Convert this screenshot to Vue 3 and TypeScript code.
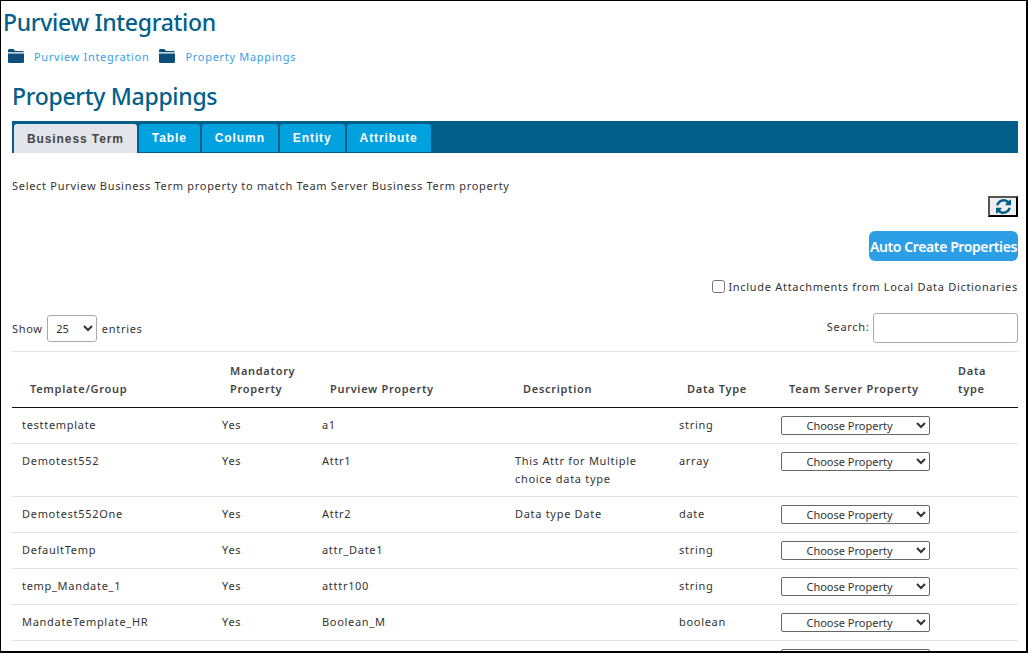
<script setup lang="ts">
const tabs = ['Business Term', 'Table', 'Column', 'Entity', 'Attribute']

const rows = [
  { group: 'testtemplate', mandatory: 'Yes', property: 'a1', description: '', type: 'string' },
  { group: 'Demotest552', mandatory: 'Yes', property: 'Attr1', description: 'This Attr for Multiple choice data type', type: 'array' },
  { group: 'Demotest552One', mandatory: 'Yes', property: 'Attr2', description: 'Data type Date', type: 'date' },
  { group: 'DefaultTemp', mandatory: 'Yes', property: 'attr_Date1', description: '', type: 'string' },
  { group: 'temp_Mandate_1', mandatory: 'Yes', property: 'atttr100', description: '', type: 'string' },
  { group: 'MandateTemplate_HR', mandatory: 'Yes', property: 'Boolean_M', description: '', type: 'boolean' },
  { group: '', mandatory: '', property: '', description: '', type: '' }
]
</script>

<template>
  <div class="page">
    <h1 class="title">Purview Integration</h1>
    <nav class="crumbs">
      <template v-for="c in ['Purview Integration', 'Property Mappings']" :key="c">
        <svg class="folder" viewBox="0 0 16 14"><path d="M0 1.6C0 .7.7 0 1.6 0h3.8l1.7 1.9h7.3c.9 0 1.6.6 1.6 1.4H0z" /><path d="M0 4.4h16v8c0 .9-.7 1.6-1.6 1.6H1.6C.7 14 0 13.300 0 12.400z" /></svg>
        <a class="crumb">{{ c }}</a>
      </template>
    </nav>
    <div class="content">
      <h2 class="subtitle">Property Mappings</h2>
      <div class="tabs">
        <button v-for="(t, i) in tabs" :key="t" class="tab" :class="{ active: i === 0 }">{{ t }}</button>
      </div>
      <p class="hint">Select Purview Business Term property to match Team Server Business Term property</p>
      <div class="actions">
        <button class="refresh" aria-label="Refresh">
          <svg viewBox="0 0 1536 1536" width="15" height="15"><path fill="#035f8a" d="M1511 928q0 5-1 7-64 268-268 434.500T764 1536q-146 0-282.500-55T238 1324l-129 129q-19 19-45 19t-45-19-19-45V960q0-26 19-45t45-19h448q26 0 45 19t19 45-19 45l-137 137q71 66 161 102t187 36q134 0 250-65t186-179q11-17 53-117 8-23 30-23h192q13 0 22.500 9.500t9.500 22.500zm25-800v448q0 26-19 45t-45 19h-448q-26 0-45-19t-19-45 19-45l138-138q-148-137-349-137-134 0-250 65T332 500q-11 17-53 117-8 23-30 23H50q-13 0-22.500-9.500T18 608v-7q65-268 270-434.500T768 0q146 0 284 55.500T1297 212l130-129q19-19 45-19t45 19 19 45z" /></svg>
        </button>
        <button class="auto">Auto Create Properties</button>
        <label class="attach"><input type="checkbox" /><span>Include Attachments from Local Data Dictionaries</span></label>
      </div>
      <div class="controls">
        <label class="length">Show
          <select class="length-select"><option>25</option></select>
          entries</label>
        <label class="search">Search: <input type="text" /></label>
      </div>
      <table class="grid">
        <colgroup>
          <col style="width: 200px" /><col style="width: 100px" /><col style="width: 193px" /><col style="width: 164px" /><col style="width: 102px" /><col style="width: 169px" /><col style="width: 78px" />
        </colgroup>
        <thead>
          <tr>
            <th>Template/Group</th>
            <th>Mandatory Property</th>
            <th>Purview Property</th>
            <th>Description</th>
            <th>Data Type</th>
            <th>Team Server Property</th>
            <th class="narrow">Data type</th>
          </tr>
        </thead>
        <tbody>
          <tr v-for="(r, i) in rows" :key="i">
            <td>{{ r.group }}</td>
            <td>{{ r.mandatory }}</td>
            <td>{{ r.property }}</td>
            <td>{{ r.description }}</td>
            <td>{{ r.type }}</td>
            <td><select class="prop"><option>Choose Property</option></select></td>
            <td></td>
          </tr>
        </tbody>
      </table>
    </div>
  </div>
</template>

<style>
html, body { margin: 0; overflow: hidden; background: #fff; }
</style>

<style scoped>
.page {
  box-sizing: border-box;
  height: 653px;
  width: 1028px;
  overflow: hidden;
  border: 1px solid #000;
  border-width: 1px 2px 2px 1px;
  font-family: "Noto Sans", "Open Sans", sans-serif;
  font-size: 11px;
  letter-spacing: 0.7px;
  color: #333;
}
.title, .subtitle {
  margin: 0;
  font-size: 23px;
  font-weight: 500;
  line-height: 30px;
  letter-spacing: -0.3px;
  color: #035f8a;
}
.title { padding: 6px 0 0 2px; }
.crumbs {
  display: flex;
  align-items: center;
  height: 20px;
  margin-top: 9px;
  padding-left: 7px;
}
.folder { width: 16px; height: 14px; fill: #0d4f78; margin-right: 10px; }
.crumb { color: #3b9ee8; margin-right: 10px; }
.content { padding: 0 8px 0 11px; }
.subtitle { margin-top: 15px; }
.tabs {
  display: flex;
  gap: 2px;
  height: 32px;
  margin-top: 10px;
  padding: 3px 0 0 2px;
  box-sizing: border-box;
  background: #035f8a;
}
.tab {
  height: 28px;
  padding: 0 13px;
  border: 0;
  border-radius: 3px 3px 0 0;
  background: #00a1de;
  color: #fff;
  font-family: "Liberation Sans", sans-serif;
  font-size: 12px;
  font-weight: 700;
  letter-spacing: 0.9px;
}
.tab.active {
  height: 29px;
  padding: 0 13px;
  background: #e4e5ea;
  color: #444;
}
.hint { margin: 25px 0 0; line-height: 16px; }
.actions { display: flex; flex-direction: column; align-items: flex-end; }
.refresh {
  width: 30px;
  height: 21px;
  margin-top: 2px;
  padding: 0;
  display: flex;
  align-items: center;
  justify-content: center;
  border: 2px solid #000;
  border-color: #555 #000 #000 #555;
  background: #efefef;
}
.auto {
  width: 149px;
  height: 30px;
  margin-top: 14px;
  padding: 0;
  border: 0;
  border-radius: 6px;
  background: #2b9ee6;
  color: #fff;
  font-family: inherit;
  font-size: 14px;
  font-weight: 600;
  letter-spacing: -0.4px;
}
.attach { display: flex; align-items: center; gap: 3px; margin-top: 16px; height: 18px; }
.attach input { width: 13px; height: 13px; margin: 1px 0 0; }
.controls {
  display: flex;
  justify-content: space-between;
  align-items: center;
  margin-top: 18px;
  height: 30px;
}
.length-select {
  width: 50px;
  height: 27px;
  margin: 0 1px;
  padding-left: 4px;
  border: 1px solid #aaa;
  border-radius: 3px;
  background: #fff;
  font: inherit;
  color: #333;
}
.search input {
  box-sizing: border-box;
  width: 145px;
  height: 30px;
  margin-left: 0;
  border: 1px solid #aaa;
  border-radius: 3px;
  vertical-align: middle;
}
.grid {
  table-layout: fixed;
  width: 1006px;
  margin-top: 8px;
  border-collapse: collapse;
  border-top: 1px solid #e3e3e8;
}
th {
  height: 56px;
  box-sizing: border-box;
  padding: 9px 10px 9px 18px;
  border-bottom: 1px solid #111;
  text-align: left;
  vertical-align: bottom;
  font-weight: 600;
  line-height: 18px;
  color: #444;
}
td {
  padding: 8px 10px;
  border-bottom: 1px solid #e0e0e6;
  vertical-align: top;
  line-height: 18px;
}
.prop {
  display: block;
  width: 149px;
  height: 19px;
  margin-top: 0;
  border: 1px solid #666;
  border-radius: 2px;
  background: #fff;
  font: 11px "Noto Sans", sans-serif;
  letter-spacing: 0;
  color: #333;
  text-align: center;
}
</style>
